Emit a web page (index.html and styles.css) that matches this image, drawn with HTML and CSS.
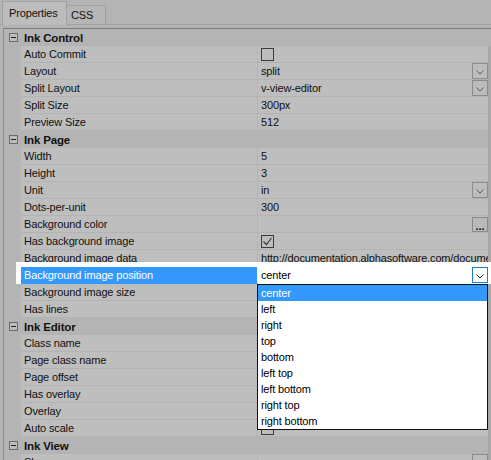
FILE: index.html
```html
<!DOCTYPE html>
<html lang="en">
<head>
    <meta charset="UTF-8">
    <title>Properties</title>
    <link rel="stylesheet" href="styles.css">
</head>
<body>

<div class="tabs">
    <div class="tab active">Properties</div>
    <div class="tab">CSS</div>
</div>

<div class="panel">
    <div class="grid">
        <div class="rows">
            <div class="cat"><span class="toggle"></span>Ink Control</div>
            <div class="row"><div class="gut"></div><div class="name">Auto Commit</div><div class="val"><span class="check"></span></div></div>
            <div class="row"><div class="gut"></div><div class="name">Layout</div><div class="val"><span class="text">split</span><span class="dd"><svg width="8" height="5" viewBox="0 0 8 5"><polyline points="0.5,0.5 4,4 7.5,0.5" fill="none" stroke="#5a5a5a" stroke-width="1"/></svg></span></div></div>
            <div class="row"><div class="gut"></div><div class="name">Split Layout</div><div class="val"><span class="text">v-view-editor</span><span class="dd"><svg width="8" height="5" viewBox="0 0 8 5"><polyline points="0.5,0.5 4,4 7.5,0.5" fill="none" stroke="#5a5a5a" stroke-width="1"/></svg></span></div></div>
            <div class="row"><div class="gut"></div><div class="name">Split Size</div><div class="val"><span class="text">300px</span></div></div>
            <div class="row"><div class="gut"></div><div class="name">Preview Size</div><div class="val"><span class="text">512</span></div></div>

            <div class="cat"><span class="toggle"></span>Ink Page</div>
            <div class="row"><div class="gut"></div><div class="name">Width</div><div class="val"><span class="text">5</span></div></div>
            <div class="row"><div class="gut"></div><div class="name">Height</div><div class="val"><span class="text">3</span></div></div>
            <div class="row"><div class="gut"></div><div class="name">Unit</div><div class="val"><span class="text">in</span><span class="dd"><svg width="8" height="5" viewBox="0 0 8 5"><polyline points="0.5,0.5 4,4 7.5,0.5" fill="none" stroke="#5a5a5a" stroke-width="1"/></svg></span></div></div>
            <div class="row"><div class="gut"></div><div class="name">Dots-per-unit</div><div class="val"><span class="text">300</span></div></div>
            <div class="row"><div class="gut"></div><div class="name">Background color</div><div class="val"><span class="text"></span><span class="dots">...</span></div></div>
            <div class="row"><div class="gut"></div><div class="name">Has background image</div><div class="val"><span class="check"><svg width="11" height="11" viewBox="0 0 11 11"><polyline points="1.5,5.5 4.5,8.5 9.5,2" fill="none" stroke="#3a3a3a" stroke-width="1.2"/></svg></span></div></div>
            <div class="row"><div class="gut"></div><div class="name">Background image data</div><div class="val"><span class="text">http://documentation.alphasoftware.com/documentation/pages</span></div></div>
            <div class="row sel"><div class="gut"></div><div class="name">Background image position</div><div class="val"><span class="text">center</span><span class="dd"><svg width="8" height="5" viewBox="0 0 8 5"><polyline points="0.5,0.5 4,4 7.5,0.5" fill="none" stroke="#222" stroke-width="1"/></svg></span></div></div>
            <div class="row"><div class="gut"></div><div class="name">Background image size</div><div class="val"></div></div>
            <div class="row"><div class="gut"></div><div class="name">Has lines</div><div class="val"></div></div>

            <div class="cat"><span class="toggle"></span>Ink Editor</div>
            <div class="row"><div class="gut"></div><div class="name">Class name</div><div class="val"></div></div>
            <div class="row"><div class="gut"></div><div class="name">Page class name</div><div class="val"></div></div>
            <div class="row"><div class="gut"></div><div class="name">Page offset</div><div class="val"></div></div>
            <div class="row"><div class="gut"></div><div class="name">Has overlay</div><div class="val"></div></div>
            <div class="row"><div class="gut"></div><div class="name">Overlay</div><div class="val"></div></div>
            <div class="row"><div class="gut"></div><div class="name">Auto scale</div><div class="val"><span class="check"></span></div></div>

            <div class="cat"><span class="toggle"></span>Ink View</div>
            <div class="row"><div class="gut"></div><div class="name">Show</div><div class="val"><span class="text"></span><span class="dd"></span></div></div>
        </div>
        <div class="scroll"></div>
    </div>
</div>

<!-- spotlight round the row being edited -->
<div class="spot"></div>

<div class="list">
    <div class="opt on">center</div>
    <div class="opt">left</div>
    <div class="opt">right</div>
    <div class="opt">top</div>
    <div class="opt">bottom</div>
    <div class="opt">left top</div>
    <div class="opt">left bottom</div>
    <div class="opt">right top</div>
    <div class="opt">right bottom</div>
</div>

</body>
</html>
```

FILE: styles.css
```css
/* property grid, dimmed except the edited row */
* { box-sizing: border-box; }
body { margin: 0; width: 491px; height: 460px; overflow: hidden; position: relative; background: #b4b4b4; font-family: 'Liberation Sans', Arial, sans-serif; font-size: 11px; letter-spacing: -0.15px; color: #111; }

.tabs { display: flex; align-items: flex-end; height: 25px; padding-left: 2px; border-bottom: 1px solid #a2a2a2; }
.tab { width: 39px; height: 19px; line-height: 18px; padding-left: 4px; background: #b6b6b6; border: 1px solid #a0a0a0; border-bottom: none; border-left: none; margin-bottom: 0; }
.tab.active { width: 65px; height: 24px; line-height: 22px; padding-left: 6px; background: #bcbcbc; border-left: 1px solid #a0a0a0; margin-bottom: -1px; }

.panel { padding-top: 3px; }
.grid { display: flex; margin-left: 3px; border-top: 1px solid #7c7c7c; border-left: 1px solid #8a8a8a; height: 432px; }
.rows { width: 484px; }
.scroll { flex: 1; background: #ababab; border-left: 1px solid #a6a6a6; margin-top: 17px; }

.cat { display: flex; align-items: center; height: 17px; padding-left: 5px; background: #b4b4b4; font-weight: bold; font-size: 11.5px; }
.toggle { position: relative; width: 9px; height: 9px; margin-right: 6px; border: 1px solid #6a6a6a; background: #bdbdbd; }
.toggle::after { content: ''; position: absolute; left: 1px; top: 3px; width: 5px; height: 1px; background: #222; }

.row { display: flex; height: 17px; }
.gut { width: 17px; background: #b4b4b4; }
.name { width: 237px; padding-left: 3px; line-height: 16px; background: #bebebe; border-bottom: 1px solid #b3b3b3; border-right: 1px solid #b3b3b3; white-space: nowrap; }
.val { width: 230px; display: flex; align-items: flex-start; padding-left: 3px; background: #bebebe; border-bottom: 1px solid #b3b3b3; line-height: 16px; }
.text { flex: 1; overflow: hidden; white-space: nowrap; }

.check { width: 13px; height: 13px; margin-top: 2px; border: 1px solid #3c3c3c; background: #bdbdbd; display: flex; align-items: center; justify-content: center; }
.dd { width: 16px; height: 16px; border: 1px solid #8c8c8c; background: #bcbcbc; display: flex; align-items: center; justify-content: center; padding-top: 2px; }
.dots { width: 16px; height: 15px; margin-top: 1px; border: 1px solid #8a8a8a; background: #b9b9b9; font-weight: bold; font-size: 11px; line-height: 17px; text-align: center; letter-spacing: 0; color: #111; }

.row.sel { position: relative; z-index: 2; }
.row.sel .gut { background: transparent; }
.row.sel .name { background: #3399ff; color: #fff; border-bottom-color: #3399ff; border-right-color: #fff; }
.row.sel .val { background: #fff; border-bottom-color: #fff; color: #000; }
.row.sel .dd { background: #fff; border-color: #1c79d6; }

.spot { position: absolute; left: 16px; top: 262px; width: 475px; height: 22px; background: #fff; z-index: 1; }

.list { position: absolute; left: 257px; top: 284px; width: 231px; height: 146px; background: #fff; border: 1px solid #111; z-index: 3; color: #000; }
.opt { height: 16px; line-height: 16px; padding-left: 3px; }
.opt.on { background: #3399ff; color: #fff; }
```
